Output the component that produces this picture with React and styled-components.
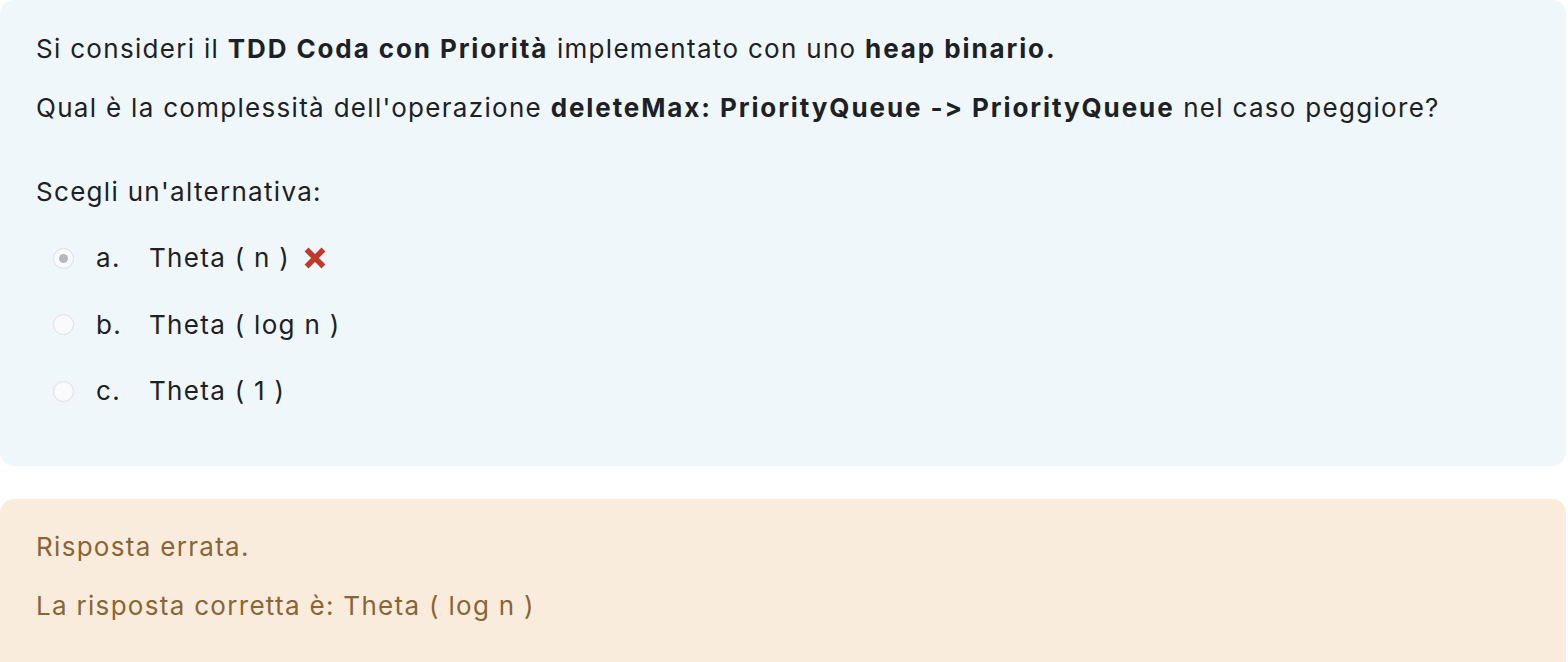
import React from 'react';
import styled, { createGlobalStyle } from 'styled-components';

const Global = createGlobalStyle`
  body {
    margin: 0;
    background: #ffffff;
    font-family: Inter, "Noto Sans", sans-serif;
  }
`;

const Page = styled.div`
  display: flex;
  flex-direction: column;
  gap: 33px;
  width: 1566px;
`;

const Box = styled.div`
  border-radius: 14px;
  background: ${(p) => (p.$tone === 'feedback' ? '#faecdd' : '#eff7fb')};
  color: ${(p) => (p.$tone === 'feedback' ? '#8a6534' : '#1d2125')};
  padding: ${(p) => (p.$tone === 'feedback' ? '30px 36px 60px' : '31px 36px 57px')};
  font-size: 26px;
  line-height: 36px;
  letter-spacing: 1.3px;
  font-feature-settings: 'calt' 0, 'liga' 0;
  font-variant-ligatures: none;
`;

const Para = styled.p`
  margin: 0 0 23px;

  &:last-child {
    margin-bottom: 0;
  }

  b {
    font-weight: 700;
    letter-spacing: 1.9px;
  }
`;

const Prompt = styled.div`
  margin-top: 48px;
`;

const Options = styled.div`
  display: flex;
  flex-direction: column;
  gap: 30.5px;
  margin-top: 30px;
  padding-left: 17px;
`;

const Option = styled.div`
  display: flex;
  align-items: center;
  height: 36px;
`;

const Radio = styled.span`
  display: inline-flex;
  align-items: center;
  justify-content: center;
  box-sizing: border-box;
  width: 21px;
  height: 21px;
  border-radius: 50%;
  border: 1px solid #dcdfe3;
  background: #f8fafb;
  margin-right: 22px;

  &::after {
    content: '';
    display: ${(p) => (p.$checked ? 'block' : 'none')};
    width: 9px;
    height: 9px;
    border-radius: 50%;
    background: #b5b9bd;
  }
`;

const Letter = styled.span`
  width: 53px;
`;

const Cross = styled.svg`
  margin-left: 14px;
  width: 22px;
  height: 22px;
`;

const options = [
  { letter: 'a.', text: 'Theta ( n )', checked: true, wrong: true },
  { letter: 'b.', text: 'Theta ( log n )' },
  { letter: 'c.', text: 'Theta ( 1 )' },
];

const App = () => {
  return (
    <>
      <Global />
      <Page>
        <Box>
          <Para>
            Si consideri il <b>TDD Coda con Priorità</b> implementato con uno <b>heap binario.</b>
          </Para>
          <Para>
            Qual è la complessità dell'operazione <b>deleteMax: PriorityQueue -&gt; PriorityQueue</b> nel caso peggiore?
          </Para>
          <Prompt>Scegli un'alternativa:</Prompt>
          <Options>
            {options.map((o) => (
              <Option key={o.letter}>
                <Radio $checked={o.checked} />
                <Letter>{o.letter}</Letter>
                <span>{o.text}</span>
                {o.wrong && (
                  <Cross viewBox="0 0 22 22">
                    <path d="M4.5 4.5 L17.5 17.5 M17.5 4.5 L4.5 17.5" stroke="#c0392b" strokeWidth="5.5" strokeLinecap="square" />
                  </Cross>
                )}
              </Option>
            ))}
          </Options>
        </Box>
        <Box $tone="feedback">
          <Para>Risposta errata.</Para>
          <Para>La risposta corretta è: Theta ( log n )</Para>
        </Box>
      </Page>
    </>
  );
};

export default App;
